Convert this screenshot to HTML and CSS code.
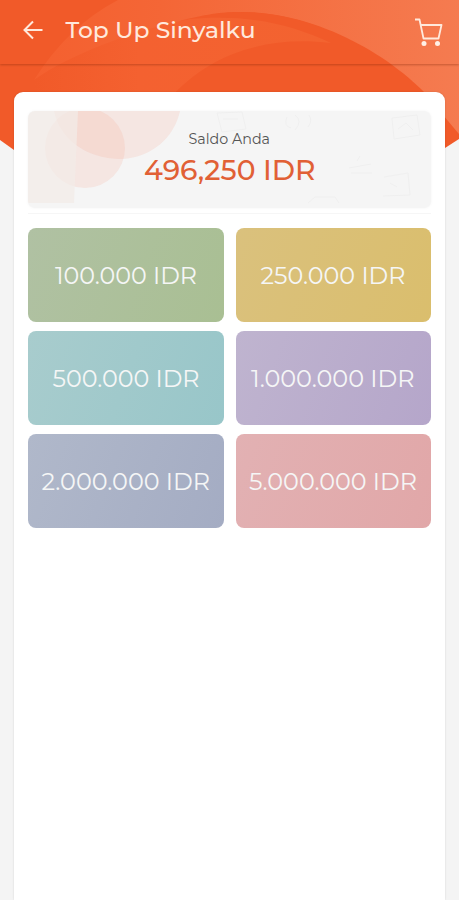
FILE: index.html
```html
<!DOCTYPE html>
<html lang="id">
<head>
<meta charset="utf-8">
<title>Top Up Sinyalku</title>
<link rel="stylesheet" href="styles.css">
</head>
<body>
<div class="screen">
  <svg class="backdrop" viewBox="0 0 459 200" aria-hidden="true">
    <defs>
      <linearGradient id="leaf" gradientUnits="userSpaceOnUse" x1="34" x2="459" y1="0" y2="0">
        <stop offset="0" stop-color="#f4602f"/>
        <stop offset=".3" stop-color="#f46636"/>
        <stop offset="1" stop-color="#f57b50"/>
      </linearGradient>
      <linearGradient id="inner" gradientUnits="userSpaceOnUse" x1="34" x2="335" y1="0" y2="0">
        <stop offset="0" stop-color="#f15a29"/>
        <stop offset=".35" stop-color="#f46130"/>
        <stop offset="1" stop-color="#f36330"/>
      </linearGradient>
      <clipPath id="hero"><path d="M0 0H459V139L445 148Q230 270 14 150L0 140Z"/></clipPath>
    </defs>
    <g clip-path="url(#hero)">
      <path fill="#f15a29" d="M0 0H459V200H0Z"/>
      <path fill="url(#leaf)" d="M34 80Q68 26 118 0H459V134C405 65 326 12 240 12C195 12 112 45 34 80Z"/>
      <path fill="#f15a29" d="M180 21C210 13 225 12 240 12C326 12 405 65 440 110H170Z"/>
      <path fill="url(#inner)" d="M34 80C70 54 140 28 190 19C252 14 292 25 331 43C260 35 207 57 170 98H20Z"/>
    </g>
  </svg>
  <header class="bar">
    <svg class="back" viewBox="0 0 24 24"><path d="M21.5 12H4M12 3.5 3.5 12l8.500 8.500"/></svg>
    <svg class="title" viewBox="0 0 192 36"><text x=".5" y="26" textLength="190" lengthAdjust="spacingAndGlyphs">Top Up Sinyalku</text></svg>
    <svg class="cart" viewBox="0 0 30 30"><path d="M1 2.500H5.500L9.500 21.500H24.500L27.500 8H7"/><circle cx="10" cy="26.500" r="2.500"/><circle cx="23.500" cy="26.500" r="2.500"/></svg>
  </header>
  <main class="sheet">
    <section class="balance">
      <svg viewBox="0 0 403 97">
        <path class="disc" d="M26 0C31 25 55 48 94 48C124 46 146 27 152 0Z"/>
        <circle class="disc" cx="57" cy="37" r="40"/>
        <path class="fade" d="M0 0H50L46 92H0Z"/>
        <g class="doodles">
          <path d="M189 2l25-1 4 17-24 3zM195 8h15M267 4q8 6 0 15M259 6q-4 9 4 11M281 4q4 6-1 12M364 7l25-3 3 20-26 4zM370 18l8-6 7 7M321 57l22-4M323 62h21M329 50l3-5M356 66l24-4 2 22-27 1M362 72l7 4M280 92l7-6h20l4 6M240 54l6-5 7 5"/>
        </g>
        <text class="caption" x="160.500" y="32.500" textLength="81.500" lengthAdjust="spacingAndGlyphs">Saldo Anda</text>
        <text class="amount" x="116" y="68.500" textLength="171.500" lengthAdjust="spacingAndGlyphs">496,250 IDR</text>
      </svg>
    </section>
    <div class="options">
      <button class="option green"><svg viewBox="0 0 195 94"><text x="27" y="55.500" textLength="142" lengthAdjust="spacingAndGlyphs">100.000 IDR</text></svg></button>
      <button class="option gold"><svg viewBox="0 0 195 94"><text x="24.500" y="55.500" textLength="145" lengthAdjust="spacingAndGlyphs">250.000 IDR</text></svg></button>
      <button class="option teal"><svg viewBox="0 0 195 94"><text x="24.500" y="55.500" textLength="147" lengthAdjust="spacingAndGlyphs">500.000 IDR</text></svg></button>
      <button class="option purple"><svg viewBox="0 0 195 94"><text x="15" y="55.500" textLength="163.500" lengthAdjust="spacingAndGlyphs">1.000.000 IDR</text></svg></button>
      <button class="option slate"><svg viewBox="0 0 195 94"><text x="13.500" y="55.500" textLength="168.500" lengthAdjust="spacingAndGlyphs">2.000.000 IDR</text></svg></button>
      <button class="option pink"><svg viewBox="0 0 195 94"><text x="13" y="55.500" textLength="168" lengthAdjust="spacingAndGlyphs">5.000.000 IDR</text></svg></button>
    </div>
  </main>
</div>
</body>
</html>
```
FILE: styles.css
```css
* { box-sizing: border-box; }
body {
  margin: 0;
  background: #f4f4f4;
  font-family: Montserrat, Inter, sans-serif;
}
svg { display: block; }
.screen {
  position: relative;
  height: 900px;
  display: flex;
  flex-direction: column;
  overflow: hidden;
}
.backdrop {
  position: absolute;
  inset: 0 0 auto;
  width: 459px;
  height: 200px;
}
.bar {
  position: relative;
  flex: none;
  height: 64px;
  display: flex;
  align-items: center;
  padding: 0 15px 4px 21px;
  box-shadow: 0 1px 2px rgba(130, 40, 10, .4);
}
.back { width: 24px; height: 24px; }
.back path { fill: none; stroke: #ffe9dc; stroke-width: 2; }
.title { width: 192px; height: 36px; margin-left: 20px; overflow: visible; }
.title text { fill: #ffe9dd; font-size: 23px; font-weight: 500; }
.cart { width: 30px; height: 30px; margin: 4px 0 0 auto; }
.cart path { fill: none; stroke: #ffe9dc; stroke-width: 1.800; stroke-linejoin: round; }
.cart circle { fill: #fff0e6; }
.sheet {
  position: relative;
  flex: 1;
  margin: 28px 14px 0;
  padding: 19px 14px 0;
  background: #fff;
  border-radius: 9px 9px 0 0;
  box-shadow: 0 0 2px rgba(0, 0, 0, .15);
}
.balance {
  height: 97px;
  background: #f5f5f5;
  border-radius: 7px;
  overflow: hidden;
  box-shadow: 0 0 3px #f3f3f3;
}
.balance svg { width: 100%; height: 97px; }
.fade { fill: #f3ece7; opacity: .72; }
.disc { fill: #f3a995; opacity: .2; }
.doodles { fill: none; stroke: #efefef; stroke-width: 1; }
.caption { fill: #555; font-size: 14px; }
.amount { fill: #e16035; font-size: 28px; font-weight: 500; }
.options {
  display: grid;
  grid-template-columns: 195.500px 195.500px;
  grid-auto-rows: 94px;
  justify-content: space-between;
  row-gap: 9px;
  margin-top: 5px;
  padding-top: 14px;
  border-top: 1px solid #f6f6f6;
}
.option {
  padding: 0;
  border: 0;
  border-radius: 8px;
  overflow: hidden;
  font-family: inherit;
}
.option svg { width: 195px; height: 94px; }
.option text { fill: #f5f6f6; font-size: 23.500px; }
.green { background: linear-gradient(110deg, #b0c1a3, #a9bf93); }
.gold { background: linear-gradient(110deg, #dac17d, #dabe6d); }
.teal { background: linear-gradient(110deg, #a8cccd, #98c6c9); }
.purple { background: linear-gradient(110deg, #bfb4cf, #b5a6ca); }
.slate { background: linear-gradient(110deg, #b0b8ca, #a4acc3); }
.pink { background: linear-gradient(110deg, #e2b1b3, #e1a7a8); }
```
